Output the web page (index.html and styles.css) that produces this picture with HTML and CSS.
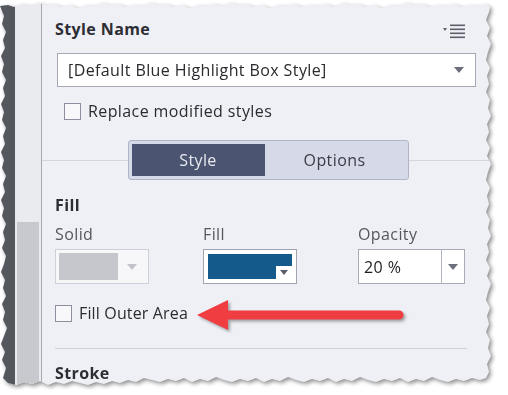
FILE: index.html
```html
<!DOCTYPE html>
<html lang="en">
<head>
  <meta charset="UTF-8" />
  <title>Style Name</title>
  <link rel="stylesheet" href="styles.css">
</head>
<body>
  <div class="shot">
    <div class="paper">
      <div class="rail"></div>
      <div class="track"><div class="thumb"></div></div>

      <div class="panel">
        <!-- Style name header -->
        <div class="head">
          <span class="title">Style Name</span>
          <svg class="menu-icon" width="23" height="15" viewBox="0 0 23 15">
            <path d="M0 4 L4 4 L2 7 Z" fill="#5d5f6b" />
            <rect x="7" y="0.5" width="15" height="1.6" fill="#5d5f6b" />
            <rect x="7" y="4.5" width="15" height="1.6" fill="#5d5f6b" />
            <rect x="7" y="8.5" width="15" height="1.6" fill="#5d5f6b" />
            <rect x="7" y="12.5" width="15" height="1.6" fill="#5d5f6b" />
          </svg>
        </div>

        <div class="select">
          <span>[Default Blue Highlight Box Style]</span>
          <span class="caret"></span>
        </div>

        <label class="check check-replace"><span class="box"></span>Replace modified styles</label>

        <!-- Style / Options switch -->
        <div class="tabbar">
          <div class="tabs">
            <span class="tab active">Style</span>
            <span class="tab">Options</span>
          </div>
        </div>

        <div class="section">
          <h3>Fill</h3>
          <div class="fill-grid">
            <div class="field">
              <span class="label">Solid</span>
              <div class="swatch-box disabled">
                <span class="chip grey"></span>
                <span class="caret light"></span>
              </div>
            </div>
            <div class="field">
              <span class="label">Fill</span>
              <div class="swatch-box color">
                <span class="chip blue"></span>
                <span class="notch"><span class="caret small"></span></span>
              </div>
            </div>
            <div class="field">
              <span class="label">Opacity</span>
              <div class="combo">
                <span class="value">20 %</span>
                <span class="combo-btn"><span class="caret"></span></span>
              </div>
            </div>
          </div>

          <label class="check check-outer"><span class="box"></span>Fill Outer Area</label>

          <hr class="rule">
          <h3 class="stroke">Stroke</h3>
        </div>
      </div>

      <!-- annotation arrow -->
      <svg class="arrow" width="225" height="50" viewBox="0 0 225 50">
        <path d="M7 25 L38 10 L38 20.5 L209 20.5 A4.5 4.5 0 0 1 209 29.5 L38 29.5 L38 40 Z" fill="#ef3d42" />
      </svg>
    </div>
  </div>
</body>
</html>
```

FILE: styles.css
```css
/* Page */
body {
  margin: 0;
  background: #fff;
  font-family: 'Open Sans', 'Noto Sans', sans-serif;
  font-size: 16px;
  letter-spacing: 0.4px;
  color: #2b2b30;
}

/* Torn screenshot frame */
.shot {
  width: 494px;
  height: 390px;
  filter: drop-shadow(2px 2px 2px rgba(0, 0, 0, 0.45));
}

.paper {
  position: relative;
  display: flex;
  width: 494px;
  height: 390px;
  background: #eff0f5;
  clip-path: polygon(
    0 6px, 8px 5px, 14px 7px, 22px 4px, 30px 6px, 38px 3px, 46px 5px, 54px 4px, 62px 7px, 70px 5px,
    78px 8px, 86px 5px, 94px 6px, 102px 3px, 110px 5px, 118px 4px, 126px 7px, 134px 5px, 142px 6px,
    150px 3px, 158px 5px, 166px 4px, 174px 7px, 182px 5px, 190px 8px, 198px 5px, 206px 6px, 214px 4px,
    222px 6px, 230px 3px, 238px 5px, 246px 4px, 254px 7px, 262px 5px, 270px 8px, 278px 5px, 286px 6px,
    294px 4px, 302px 7px, 310px 5px, 318px 6px, 326px 4px, 334px 7px, 342px 3px, 350px 5px, 358px 4px,
    366px 7px, 374px 5px, 382px 8px, 390px 5px, 398px 6px, 406px 3px, 414px 5px, 422px 4px, 430px 7px,
    438px 5px, 446px 6px, 454px 4px, 462px 7px, 470px 5px, 478px 6px, 486px 4px, 490px 7px,
    489px 12px, 486px 20px, 490px 28px, 487px 36px, 491px 44px, 488px 52px, 486px 60px, 490px 68px,
    487px 76px, 489px 84px, 486px 92px, 490px 100px, 488px 108px, 491px 116px, 487px 124px, 489px 132px,
    486px 140px, 490px 148px, 487px 156px, 491px 164px, 488px 172px, 486px 180px, 490px 188px,
    487px 196px, 489px 204px, 486px 212px, 490px 220px, 488px 228px, 491px 236px, 487px 244px,
    489px 252px, 486px 260px, 490px 268px, 487px 276px, 491px 284px, 488px 292px, 486px 300px,
    490px 308px, 487px 316px, 489px 324px, 486px 332px, 490px 340px, 488px 348px, 491px 356px,
    487px 364px, 489px 372px, 486px 378px,
    480px 380px, 472px 378px, 464px 381px, 456px 379px, 448px 382px, 440px 380px, 432px 377px,
    424px 381px, 416px 379px, 408px 382px, 400px 378px, 392px 381px, 384px 379px, 376px 382px,
    368px 380px, 360px 377px, 352px 381px, 344px 379px, 336px 382px, 328px 378px, 320px 381px,
    312px 379px, 304px 382px, 296px 380px, 288px 377px, 280px 381px, 272px 379px, 264px 382px,
    256px 378px, 248px 381px, 240px 379px, 232px 382px, 224px 380px, 216px 377px, 208px 381px,
    200px 379px, 192px 382px, 184px 378px, 176px 381px, 168px 379px, 160px 382px, 152px 380px,
    144px 378px, 136px 382px, 128px 380px, 120px 383px, 112px 381px, 104px 384px, 96px 382px,
    88px 385px, 80px 383px, 72px 381px, 64px 384px, 56px 382px, 48px 385px, 40px 381px, 32px 384px,
    24px 382px, 16px 385px, 8px 383px, 3px 378px,
    6px 368px, 2px 360px, 5px 352px, 1px 344px, 4px 336px, 7px 328px, 3px 320px, 5px 312px, 2px 304px,
    6px 296px, 3px 288px, 5px 280px, 1px 272px, 4px 264px, 6px 256px, 2px 248px, 5px 240px, 3px 232px,
    6px 224px, 2px 216px, 4px 208px, 1px 200px, 5px 192px, 3px 184px, 6px 176px, 2px 168px, 4px 160px,
    1px 152px, 5px 144px, 3px 136px, 6px 128px, 2px 120px, 4px 112px, 1px 104px, 5px 96px, 3px 88px,
    6px 80px, 2px 72px, 4px 64px, 1px 56px, 5px 48px, 3px 40px, 6px 32px, 2px 24px, 4px 16px
  );
}

/* Left edge: dark rail + scroll track */
.rail {
  width: 15px;
  flex: none;
  background: #55575f;
}

.track {
  width: 26px;
  flex: none;
  background: #eaebef;
  border-right: 1px solid #a7a8b0;
  display: flex;
  flex-direction: column;
  justify-content: flex-end;
}

.thumb {
  height: 168px;
  margin: 0 2px 0 2px;
  background: #c8c9ce;
}

/* Main panel */
.panel {
  flex: 1;
  display: flex;
  flex-direction: column;
}

.head {
  display: flex;
  justify-content: space-between;
  align-items: center;
  width: 411px;
  margin: 19px 0 0 13px;
  height: 20px;
}

.title {
  font-weight: 700;
  color: #2d2d33;
}

.menu-icon {
  margin-top: 4px;
}

/* Dropdown */
.select {
  display: flex;
  align-items: center;
  justify-content: space-between;
  box-sizing: border-box;
  width: 419px;
  height: 34px;
  margin: 14px 0 0 15px;
  padding: 0 11px 0 10px;
  background: #fff;
  border: 1px solid #a6a8b5;
  color: #2a2a2e;
}

.caret {
  width: 0;
  height: 0;
  border-left: 5px solid transparent;
  border-right: 5px solid transparent;
  border-top: 6px solid #6c6e7b;
}

.caret.light {
  border-top-color: #c3c4cb;
}

.caret.small {
  border-left-width: 4px;
  border-right-width: 4px;
  border-top-width: 5px;
  border-top-color: #5b5d68;
}

/* Checkboxes */
.check {
  display: flex;
  align-items: center;
  gap: 7px;
  height: 20px;
}

.box {
  width: 15px;
  height: 15px;
  border: 1.5px solid #8d8f9e;
  background: #f8f8fb;
}

.check-replace {
  margin: 14px 0 0 22px;
}

/* Style / Options segmented control */
.tabbar {
  display: flex;
  justify-content: center;
  height: 40px;
  margin-top: 19px;
  background: linear-gradient(#d4d5db, #d4d5db) center / 100% 1px no-repeat;
}

.tabs {
  display: flex;
  width: 281px;
  box-sizing: border-box;
  padding: 3px;
  background: #d5d9e8;
  border: 1px solid #afb4c6;
  border-radius: 3px;
}

.tab {
  flex: 1;
  display: flex;
  align-items: center;
  justify-content: center;
  color: #3b3c44;
}

.tab.active {
  flex: none;
  width: 133px;
  background: #4b5470;
  color: #e8eaf0;
}

/* Fill section */
.section {
  padding-left: 13px;
}

h3 {
  margin: 16px 0 0;
  font-size: 16px;
  line-height: 18px;
  font-weight: 700;
  color: #2d2d33;
}

.fill-grid {
  display: grid;
  grid-template-columns: 148px 155px 107px;
  margin-top: 10px;
}

.label {
  display: block;
  line-height: 20px;
  color: #55575f;
  margin-bottom: 5px;
}

.swatch-box {
  display: flex;
  align-items: center;
  box-sizing: border-box;
  width: 94px;
  height: 35px;
  padding: 3px;
  background: #fff;
  border: 1px solid #a2a4b2;
}

.swatch-box.disabled {
  border-color: #cdcfdb;
  background: #f7f7fa;
}

.chip {
  align-self: stretch;
}

.chip.grey {
  width: 59px;
  background: #c6c7cc;
  margin-right: 9px;
}

.swatch-box.color {
  position: relative;
  padding: 4px;
}

.chip.blue {
  flex: 1;
  background: #145b8b;
}

.notch {
  position: absolute;
  right: 4px;
  bottom: 4px;
  width: 16px;
  height: 13px;
  background: #fff;
  display: flex;
  align-items: center;
  justify-content: center;
}

/* Opacity combo */
.combo {
  display: flex;
  box-sizing: border-box;
  height: 35px;
  background: #fff;
  border: 1px solid #a8aab7;
}

.value {
  flex: 1;
  display: flex;
  align-items: center;
  padding-left: 5px;
  color: #1e1e22;
}

.combo-btn {
  width: 22px;
  display: flex;
  align-items: center;
  justify-content: center;
  border-left: 1px solid #b2b4c0;
}

.check-outer {
  margin-top: 19px;
  letter-spacing: 0.15px;
}

.rule {
  width: 412px;
  margin: 25px 0 0;
  border: 0;
  border-top: 1.5px solid #cfd0d7;
}

h3.stroke {
  margin-top: 15px;
}

/* Annotation arrow laid over the panel */
.arrow {
  position: absolute;
  left: 190px;
  top: 290px;
  filter: drop-shadow(2px 2px 1.5px rgba(0, 0, 0, 0.35));
}
```
